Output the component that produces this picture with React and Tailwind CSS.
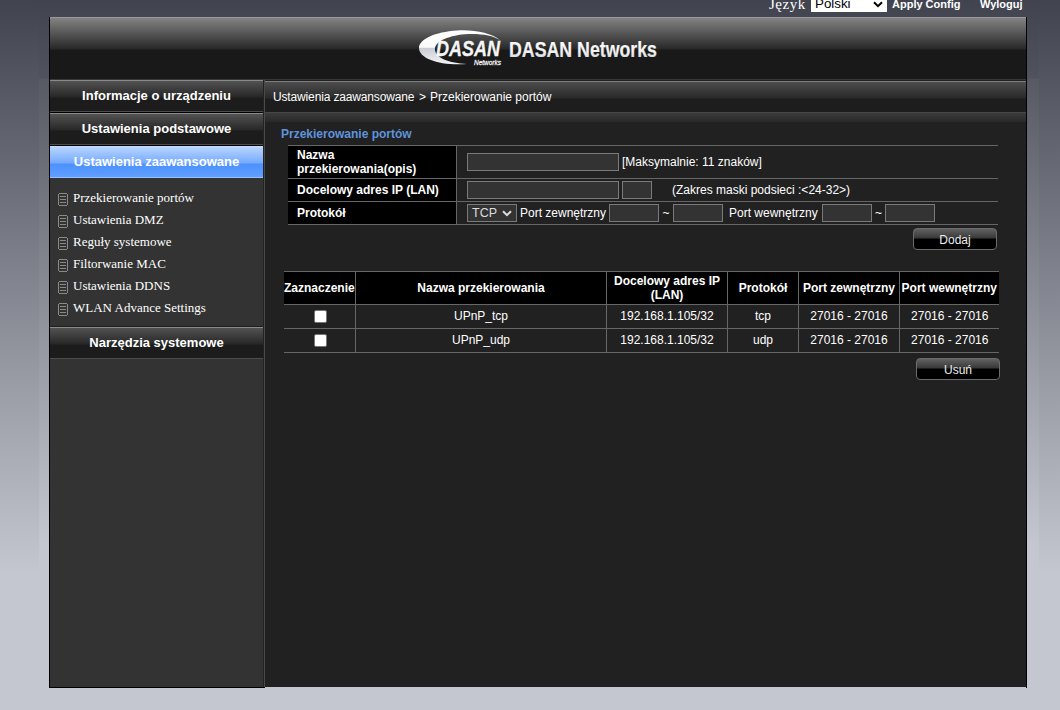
import React from "react";

const links = [
  "Przekierowanie portów",
  "Ustawienia DMZ",
  "Reguły systemowe",
  "Filtorwanie MAC",
  "Ustawienia DDNS",
  "WLAN Advance Settings",
];

const rows = [
  ["UPnP_tcp", "192.168.1.105/32", "tcp", "27016 - 27016", "27016 - 27016"],
  ["UPnP_udp", "192.168.1.105/32", "udp", "27016 - 27016", "27016 - 27016"],
];

function Chevron({ className }) {
  return (
    <svg className={className} width="10" height="7" viewBox="0 0 10 7" fill="none" stroke="currentColor" strokeWidth="2">
      <path d="M1 1.2 L5 5.2 L9 1.2" />
    </svg>
  );
}

function MenuItem({ children, className = "" }) {
  return (
    <div className={"flex h-8 items-center justify-center border-t border-b border-t-[#8b8b8b] border-b-[#4d4d4d] bg-[linear-gradient(#525252_0px,#272727_16px,#1c1c1c_17px,#1c1c1c_100%)] text-[13px] font-bold leading-none " + className}>
      {children}
    </div>
  );
}

function Field({ className }) {
  return <input className={"h-[18px] shrink-0 border border-[#7a7a7a] bg-[#333] px-1 text-xs outline-none " + className} />;
}

function PageIcon() {
  return (
    <svg width="10" height="13" viewBox="0 0 10 13" fill="none" stroke="#8a8a8a" shapeRendering="crispEdges">
      <path d="M1 .5H9M1 12.5H9M.5 1V12M9.5 1V12M2 3.5H8M2 6.5H8M2 9.5H8" />
    </svg>
  );
}

function Logo() {
  return (
    <svg width="242" height="38" viewBox="0 0 242 38" className="font-['Liberation_Sans',Arial,sans-serif]">
      <defs>
        <linearGradient id="silver" x1="0" y1="0" x2="0" y2="1">
          <stop offset="0" stopColor="#fff" />
          <stop offset=".5" stopColor="#fafafa" />
          <stop offset=".52" stopColor="#c9ccd5" />
          <stop offset="1" stopColor="#f4f4f6" />
        </linearGradient>
        <linearGradient id="title" x1="0" y1="0" x2="0" y2="1">
          <stop offset="0" stopColor="#fff" />
          <stop offset=".6" stopColor="#f2f2f2" />
          <stop offset="1" stopColor="#c8cbd2" />
        </linearGradient>
      </defs>
      <path
        d="M82 11 C73 4 57 .5 39 1.5 C17 3 1 10 1 19 C1 30 23 37 49 35 C31 34 18 29 17 21 C16 12 32 6 50 5 C64 4.5 75 6.5 82 11 Z"
        fill="url(#silver)"
      />
      <text x="18" y="27" fontSize="22" fontWeight="700" fontStyle="italic" textLength="64" lengthAdjust="spacingAndGlyphs" fill="#f5f5f6" stroke="#f5f5f6" strokeWidth=".3">DASAN</text>
      <text x="56" y="35.5" fontSize="8" textLength="27" lengthAdjust="spacingAndGlyphs" fontStyle="italic" fill="#f2f2f2" stroke="#f2f2f2" strokeWidth=".3">Networks</text>
      <text x="91" y="27.5" fontSize="22.5" fontWeight="700" textLength="148" lengthAdjust="spacingAndGlyphs" fill="url(#title)" stroke="url(#title)" strokeWidth=".2">DASAN Networks</text>
    </svg>
  );
}

function Button({ children, className }) {
  return (
    <button className={"h-[22px] w-[84px] rounded-[4px] border border-[#6b6b6b] bg-[linear-gradient(#626262_0px,#383838_9px,#000_10px,#000_100%)] pt-px text-xs leading-none text-[#eee] " + className}>
      {children}
    </button>
  );
}

export default function App() {
  return (
    <div className="h-[710px] w-[1060px] overflow-hidden bg-[linear-gradient(#41434f_0px,#c5c7d0_574px,#c5c7d0_100%)] px-[39px] font-['Liberation_Sans',Arial,sans-serif] text-xs text-white">
      <div className="h-full w-[1000px] bg-[linear-gradient(#41434f_0px,#50525d_78px,#575963_79px,#c5c7d0_545px,#c5c7d0_100%)] pl-[10px]">
        <div className="flex h-[17px] items-start whitespace-nowrap">
          <div className="ml-[720px] w-[42px] shrink-0 font-['Liberation_Serif',serif] text-[15px] leading-[8px] tracking-[0.5px]">Język</div>
          <div className="flex h-3 w-[76px] shrink-0 items-start justify-between bg-white pl-1 pr-1 text-[13.33px] leading-[8px] text-black">
            <span>Polski</span>
            <Chevron className="mt-px" />
          </div>
          <div className="ml-[5px] w-[88px] shrink-0 text-[11px] font-bold leading-[9px]">Apply Config</div>
          <div className="text-[11px] font-bold leading-[9px]">Wyloguj</div>
        </div>
        <div className="flex h-[671px] w-[978px] flex-col border-x border-black">
          <header className="flex h-[63px] shrink-0 border-t border-b border-t-[#999] border-b-[#383838] bg-[linear-gradient(#828282_0px,#282828_31px,#191919_32px,#191919_100%)] pl-[368px] pt-[11px]">
            <Logo />
          </header>
          <div className="flex h-[608px]">
            <aside className="flex w-[215px] shrink-0 border-b border-black bg-[#333]">
              <nav className="w-[213px]">
                <div className="flex flex-col gap-px bg-black">
                  <MenuItem className="pb-[2px]">Informacje o urządzeniu</MenuItem>
                  <MenuItem className="pb-[2px]">Ustawienia podstawowe</MenuItem>
                  <div className="flex h-8 items-center justify-center border-t border-b border-t-[#c5deff] border-b-[#96c0ff] bg-[linear-gradient(#b8d5ff_0px,#75aaff_16px,#4c91ff_17px,#609fff_100%)] pb-[2px] text-[13px] font-bold leading-none">
                    Ustawienia zaawansowane
                  </div>
                </div>
                <ul className="h-[149px] border-b border-[#1c1c1c] pt-[9px] font-['Liberation_Serif',serif] text-[13px]">
                  {links.map((l) => (
                    <li key={l} className="flex h-[22px] items-center pl-2">
                      <span className="mt-[3px]"><PageIcon /></span>
                      <span className="ml-[5px]">{l}</span>
                    </li>
                  ))}
                </ul>
                <MenuItem className="pb-[2px]">Narzędzia systemowe</MenuItem>
              </nav>
              <div className="w-px bg-[#222]" />
              <div className="w-px bg-[#4a4a4a]" />
            </aside>
            <main className="h-[607px] w-[761px] bg-[#212121]">
              <div className="mt-px flex h-[31px] items-center border-t border-[#7e7e7e] bg-[linear-gradient(#4d4d4d_0px,#292929_16px,#1d1d1d_17px,#1d1d1d_100%)] pl-2">
                <span className="w-[146px] tracking-[-0.15px]">Ustawienia zaawansowane</span>
                <span className="w-[11px]">&gt;</span>
                <span>Przekierowanie portów</span>
              </div>
              <div className="h-[10px] border-t border-[#484848] bg-[linear-gradient(#3b3b3b,#292929)]" />
              <h2 className="ml-4 mt-1 h-[19px] text-xs font-bold leading-[17px] text-[#5f93dc]">Przekierowanie portów</h2>
              <div className="ml-[23px] w-[710px] border-t border-[#666]">
                <div className="flex h-[33px] border-b border-[#666]">
                  <div className="flex w-[169px] items-center border-r border-[#666] bg-black pl-[9px] font-bold leading-[14px]">Nazwa<br />przekierowania(opis)</div>
                  <div className="flex items-center pl-[10px]">
                    <Field className="w-[152px]" />
                    <span className="ml-[3px]">[Maksymalnie: 11 znaków]</span>
                  </div>
                </div>
                <div className="flex h-[23px] border-b border-[#666]">
                  <div className="flex w-[169px] items-center border-r border-[#666] bg-black pl-[9px] font-bold">Docelowy adres IP (LAN)</div>
                  <div className="flex items-center pl-[10px]">
                    <Field className="w-[152px]" />
                    <Field className="ml-[3px] w-[30px]" />
                    <span className="ml-5">(Zakres maski podsieci :&lt;24-32&gt;)</span>
                  </div>
                </div>
                <div className="flex h-[23px] border-b border-[#666]">
                  <div className="flex w-[169px] items-center border-r border-[#666] bg-black pl-[9px] font-bold">Protokół</div>
                  <div className="flex items-center whitespace-nowrap pl-[10px]">
                    <div className="flex h-[18px] w-[50px] items-center justify-between border border-[#7a7a7a] bg-[#333] pl-1 pr-1 text-[12.5px] text-[#ddd]">
                      TCP <Chevron />
                    </div>
                    <span className="ml-[3px] w-[89px]">Port zewnętrzny</span>
                    <Field className="w-[50px]" />
                    <span className="w-[14px] text-center">~</span>
                    <Field className="w-[50px]" />
                    <span className="ml-[6px] w-[93px]">Port wewnętrzny</span>
                    <Field className="w-[50px]" />
                    <span className="w-[13px] text-center">~</span>
                    <Field className="w-[50px]" />
                  </div>
                </div>
              </div>
              <Button className="ml-[648px] mt-[3px] block">Dodaj</Button>
              <table className="ml-[19px] mt-[21px] w-[715px] table-fixed border-collapse text-center">
                <colgroup>
                  <col className="w-[71px]" />
                  <col className="w-[251px]" />
                  <col className="w-[121px]" />
                  <col className="w-[71px]" />
                  <col className="w-[101px]" />
                  <col className="w-[100px]" />
                </colgroup>
                <thead>
                  <tr className="h-[33px] whitespace-nowrap border-y border-[#666] bg-black leading-[14px]">
                    <th className="border-r border-[#666] p-0">Zaznaczenie</th>
                    <th className="border-r border-[#666] p-0 pl-px">Nazwa przekierowania</th>
                    <th className="border-r border-[#666] p-0 pl-px">Docelowy adres IP<br />(LAN)</th>
                    <th className="border-r border-[#666] p-0 pl-px">Protokół</th>
                    <th className="border-r border-[#666] p-0 pl-px">Port zewnętrzny</th>
                    <th className="p-0">Port wewnętrzny</th>
                  </tr>
                </thead>
                <tbody>
                  {rows.map((r) => (
                    <tr key={r[0]} className="h-6 border-b border-[#666] leading-[14px]">
                      <td className="border-r border-[#666] p-0">
                        <div className="mx-auto h-[13px] w-[13px] translate-x-px rounded-[2px] border border-[#767676] bg-white" />
                      </td>
                      {r.map((c, i) => (
                        <td key={i} className="border-r border-[#666] p-0 pb-[2px] pl-px last:border-r-0">{c}</td>
                      ))}
                    </tr>
                  ))}
                </tbody>
              </table>
              <Button className="ml-[651px] mt-[5px] block">Usuń</Button>
            </main>
          </div>
        </div>
      </div>
    </div>
  );
}
